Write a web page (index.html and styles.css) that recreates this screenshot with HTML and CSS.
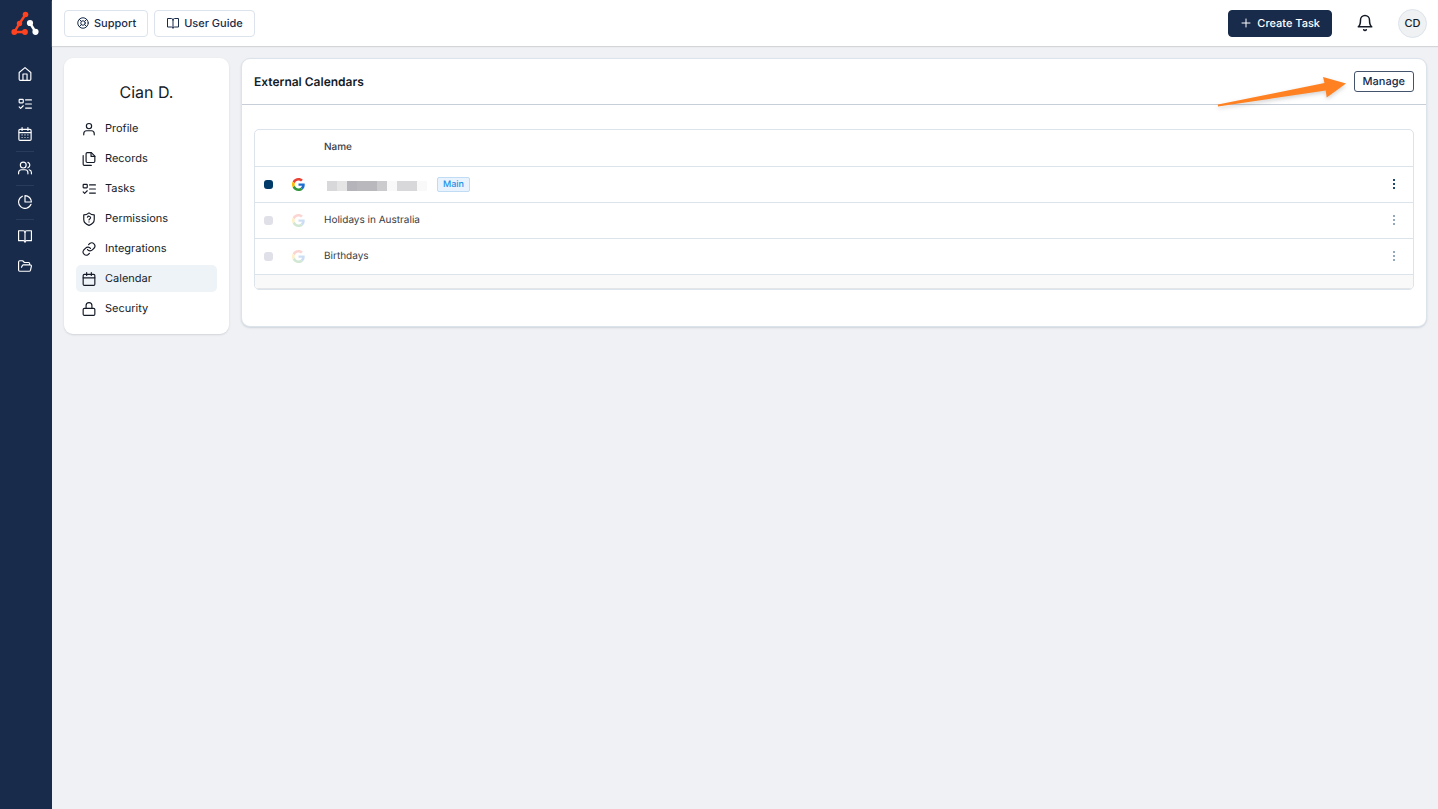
FILE: index.html
```html
<!DOCTYPE html>
<html lang="en">
<head>
<meta charset="utf-8">
<meta name="viewport" content="width=device-width, initial-scale=1">
<title>External Calendars</title>
<link rel="stylesheet" href="styles.css">
</head>
<body>
<svg class="defs" aria-hidden="true">
  <symbol id="home" viewBox="0 0 24 24"><path d="M2 9.500 12 1l10 8.500V21a2 2 0 0 1-2 2H4a2 2 0 0 1-2-2z"/><path d="M8.500 23V12h7v11"/></symbol>
  <symbol id="tasks" viewBox="0 0 24 24"><rect x="2" y="4" width="7" height="6" rx="1"/><path d="m2 17 2.500 2.500L9 15M13 5h10M13 12h10M13 19h10"/></symbol>
  <symbol id="days" viewBox="0 0 24 24"><rect x="1.500" y="4" width="21" height="19" rx="2"/><path d="M7 1v5M17 1v5M2 9.500h20M7 13.500h.01M12 13.500h.01M17 13.500h.01M7 18h.01M12 18h.01M17 18h.01"/></symbol>
  <symbol id="users" viewBox="0 0 24 24"><circle cx="9" cy="7" r="5"/><path d="M1 22v-2a5 5 0 0 1 5-5h6a5 5 0 0 1 5 5v2M23 22v-2a5 5 0 0 0-4-5M17 2.300a5 5 0 0 1 0 9.400"/></symbol>
  <symbol id="pie" viewBox="0 0 24 24"><path d="M12 1a11 11 0 0 1 11 11H12z"/><path d="M7.500 2A11 11 0 1 0 22.300 16"/></symbol>
  <symbol id="book" viewBox="0 0 24 24"><path d="M12 6a3 3 0 0 0-3-3H1v17h8a3 3 0 0 1 3 2.500A3 3 0 0 1 15 20h8V3h-8a3 3 0 0 0-3 3z"/><path d="M12 6v16"/></symbol>
  <symbol id="folder" viewBox="0 0 24 24"><path d="m6 14 1.500-3A2 2 0 0 1 9.300 10H21a2 2 0 0 1 1.900 2.500l-1.500 6.500A2 2 0 0 1 19.500 21H3a2 2 0 0 1-2-2V5a2 2 0 0 1 2-2h5l3 3h7a2 2 0 0 1 2 2v2"/></symbol>
  <symbol id="lifebuoy" viewBox="0 0 24 24"><circle cx="12" cy="12" r="10.500"/><circle cx="12" cy="12" r="4.500"/><path d="m4.600 4.600 4.200 4.200M15.200 15.200l4.200 4.200M19.400 4.600l-4.200 4.200M8.800 15.200l-4.200 4.200"/></symbol>
  <symbol id="plus" viewBox="0 0 24 24"><path d="M4 12h16M12 4v16"/></symbol>
  <symbol id="bell" viewBox="0 0 24 24"><path d="M6 8a6 6 0 0 1 12 0c0 7 3 9 3 9H3s3-2 3-9"/><path d="M10.300 21a2 2 0 0 0 3.400 0"/></symbol>
  <symbol id="user" viewBox="0 0 24 24"><circle cx="12" cy="7" r="4.500"/><path d="M3 22v-2a5 5 0 0 1 5-5h8a5 5 0 0 1 5 5v2"/></symbol>
  <symbol id="files" viewBox="0 0 24 24"><path d="M16 1H9a2 2 0 0 0-2 2v13a2 2 0 0 0 2 2h11a2 2 0 0 0 2-2V7z"/><path d="M15.500 1v6.500H22M2 6v15a2 2 0 0 0 2 2h12"/></symbol>
  <symbol id="shield" viewBox="0 0 24 24"><path d="M21 13c0 5-3.500 8-9 10-5.500-2-9-5-9-10V5c3.500 0 6-1 9-3.500C15 4 17.500 5 21 5z"/><path d="M9.300 9a2.800 2.800 0 0 1 5.400.9c0 1.900-2.700 2.100-2.700 3.600M12 17h.01"/></symbol>
  <symbol id="link" viewBox="0 0 24 24"><path d="M9.500 13a5.500 5.500 0 0 0 8.200.6l3.300-3.300a5.500 5.500 0 0 0-7.700-7.700l-2 1.900"/><path d="M14.500 11a5.500 5.500 0 0 0-8.200-.6L3 13.700a5.500 5.500 0 0 0 7.700 7.700l2-1.900"/></symbol>
  <symbol id="calendar" viewBox="0 0 24 24"><rect x="2" y="4" width="20" height="19" rx="2"/><path d="M8 1v5M16 1v5M2 10h20"/></symbol>
  <symbol id="lock" viewBox="0 0 24 24"><rect x="2" y="11" width="20" height="12" rx="2"/><path d="M7 11V6a5 5 0 0 1 10 0v5"/></symbol>
  <symbol id="google" viewBox="0 0 48 48"><path fill="#ea4335" d="M24 9.500c3.540 0 6.710 1.220 9.210 3.600l6.850-6.850C35.900 2.380 30.470 0 24 0 14.620 0 6.510 5.380 2.560 13.220l7.980 6.190C12.430 13.720 17.740 9.500 24 9.500z"/><path fill="#1f6fd0" d="M46.980 24.550c0-1.570-.15-3.090-.38-4.550H24v9.020h12.940c-.58 2.960-2.260 5.480-4.780 7.180l7.730 6c4.510-4.180 7.090-10.360 7.090-17.650z"/><path fill="#fbbc05" d="M10.530 28.590a14.500 14.500 0 0 1 0-9.180l-7.980-6.190a24 24 0 0 0 0 21.560z"/><path fill="#34963c" d="M24 48c6.480 0 11.930-2.130 15.890-5.810l-7.730-6c-2.150 1.450-4.920 2.300-8.160 2.300-6.260 0-11.570-4.220-13.470-9.910l-7.980 6.190C6.510 42.620 14.620 48 24 48z"/></symbol>
  <symbol id="dots" viewBox="0 0 4 12"><path fill="currentColor" d="M1 1h2v2H1zM1 5h2v2H1zM1 9h2v2H1z"/></symbol>
</svg>

<div class="app">
  <nav class="rail" aria-label="Main">
    <a class="logo" href="#" aria-label="Dashboard">
      <svg viewBox="0 0 28 26" width="28" height="26">
        <path fill="none" stroke="#ff4320" stroke-width="2.400" d="m14.500 3.500-6 9L3.500 21H14"/>
        <g fill="#ff4320"><circle cx="14.500" cy="3.500" r="2.800"/><circle cx="8.500" cy="12.500" r="2.700"/><circle cx="3.300" cy="21" r="2.900"/><circle cx="14" cy="21" r="2.900"/></g>
        <path stroke="#fff" stroke-width="2.400" d="m19 12 5.500 9"/><circle fill="#fff" cx="19" cy="12" r="3.100"/><circle fill="#fff" cx="24.500" cy="20.800" r="3.100"/>
      </svg>
    </a>
    <a class="rail-link" href="#" aria-label="Home"><svg class="icon"><use href="#home"/></svg></a>
    <a class="rail-link" href="#" aria-label="Tasks"><svg class="icon"><use href="#tasks"/></svg></a>
    <a class="rail-link" href="#" aria-label="Calendar"><svg class="icon"><use href="#days"/></svg></a>
    <hr class="rail-line">
    <a class="rail-link" href="#" aria-label="Contacts"><svg class="icon"><use href="#users"/></svg></a>
    <hr class="rail-line">
    <a class="rail-link" href="#" aria-label="Reports"><svg class="icon"><use href="#pie"/></svg></a>
    <hr class="rail-line">
    <a class="rail-link" href="#" aria-label="Library"><svg class="icon"><use href="#book"/></svg></a>
    <a class="rail-link" href="#" aria-label="Files"><svg class="icon"><use href="#folder"/></svg></a>
  </nav>

  <div class="page">
    <header class="topbar">
      <button class="btn"><svg class="icon icon-small"><use href="#lifebuoy"/></svg>Support</button>
      <button class="btn"><svg class="icon icon-small"><use href="#book"/></svg>User Guide</button>
      <div class="topbar-end">
        <button class="btn btn-primary"><svg class="icon icon-small"><use href="#plus"/></svg>Create Task</button>
        <button class="bell" aria-label="Notifications"><svg class="icon icon-large"><use href="#bell"/></svg></button>
        <button class="avatar">CD</button>
      </div>
    </header>

    <main class="content">
      <aside class="card profile">
        <h1 class="profile-name">Cian D.</h1>
        <nav class="menu" aria-label="Profile">
          <a class="menu-link" href="#"><svg class="icon"><use href="#user"/></svg>Profile</a>
          <a class="menu-link" href="#"><svg class="icon"><use href="#files"/></svg>Records</a>
          <a class="menu-link" href="#"><svg class="icon"><use href="#tasks"/></svg>Tasks</a>
          <a class="menu-link" href="#"><svg class="icon"><use href="#shield"/></svg>Permissions</a>
          <a class="menu-link" href="#"><svg class="icon"><use href="#link"/></svg>Integrations</a>
          <a class="menu-link active" href="#" aria-current="page"><svg class="icon"><use href="#calendar"/></svg>Calendar</a>
          <a class="menu-link" href="#"><svg class="icon"><use href="#lock"/></svg>Security</a>
        </nav>
      </aside>

      <section class="card calendars">
        <div class="card-head">
          <h2 class="card-title">External Calendars</h2>
          <div class="manage-wrap">
            <svg class="arrow" viewBox="0 0 130 32" width="130" height="32" aria-hidden="true"><path fill="#ff8121" d="M1 29.500 107.500 8 106 2l23 6.500-19.300 14-1-7L1 31.500z"/></svg>
            <button class="manage">Manage</button>
          </div>
        </div>
        <div class="card-body">
          <div class="table-frame">
            <table class="table">
              <thead>
                <tr><th class="col-state"></th><th class="col-source"></th><th class="col-name">Name</th><th class="col-more"></th></tr>
              </thead>
              <tbody>
                <tr>
                  <td class="col-state"><span class="state on"></span></td>
                  <td class="col-source"><svg class="source"><use href="#google"/></svg></td>
                  <td class="col-name"><div class="name-line"><span class="redacted"><i class="t2"></i><i class="t1"></i><i class="t5"></i><i class="t4"></i><i class="t4"></i><i class="t3"></i><i></i><i class="t2"></i><i class="t2"></i><i></i></span><span class="tag">Main</span></div></td>
                  <td class="col-more"><button class="more" aria-label="More options"><svg class="dots"><use href="#dots"/></svg></button></td>
                </tr>
                <tr class="off">
                  <td class="col-state"><span class="state"></span></td>
                  <td class="col-source"><svg class="source"><use href="#google"/></svg></td>
                  <td class="col-name">Holidays in Australia</td>
                  <td class="col-more"><button class="more" aria-label="More options"><svg class="dots"><use href="#dots"/></svg></button></td>
                </tr>
                <tr class="off">
                  <td class="col-state"><span class="state"></span></td>
                  <td class="col-source"><svg class="source"><use href="#google"/></svg></td>
                  <td class="col-name">Birthdays</td>
                  <td class="col-more"><button class="more" aria-label="More options"><svg class="dots"><use href="#dots"/></svg></button></td>
                </tr>
              </tbody>
            </table>
            <div class="table-foot"></div>
          </div>
        </div>
      </section>
    </main>
  </div>
</div>
</body>
</html>
```
FILE: styles.css
```css
* { box-sizing: border-box; }

body {
  margin: 0;
  background: #f0f1f4;
  color: #141a26;
  font: 11px/15px Inter, "Liberation Sans", sans-serif;
  text-rendering: geometricPrecision;
}

button { font: inherit; color: inherit; cursor: pointer; text-rendering: inherit; }
a { color: inherit; text-decoration: none; }

.defs { position: absolute; width: 0; height: 0; }

.icon {
  width: 14px;
  height: 14px;
  flex: none;
  fill: none;
  stroke: currentColor;
  stroke-width: 2;
  stroke-linecap: round;
  stroke-linejoin: round;
  overflow: visible;
}
.icon-small { width: 12px; height: 12px; }
.icon-large { width: 18px; height: 18px; }

.app { display: flex; min-height: 100vh; }

/* Left rail */
.rail {
  width: 52px;
  flex: none;
  padding: 11px 3px 0 0;
  background: #182b4b;
  color: #fff;
  display: flex;
  flex-direction: column;
  align-items: center;
}
.logo { display: block; height: 48px; }
.logo svg { display: block; }
.rail-link { width: 30px; height: 30px; display: grid; place-items: center; }
.rail-line { width: 18px; height: 1px; margin: 2px 0 1px; border: 0; background: #2b3c5a; }

/* Top bar */
.page { flex: 1; min-width: 0; display: flex; flex-direction: column; }
.topbar {
  display: flex;
  align-items: center;
  gap: 6px;
  padding: 8px 11px 8px 12px;
  height: 46px;
  background: #fff;
  box-shadow: 0 1px 1px #d3d5d9;
}
.btn {
  display: flex;
  align-items: center;
  gap: 5px;
  height: 27px;
  padding: 0 11px 0 12px;
  border: 1px solid #dce3ec;
  border-radius: 4px;
  background: #fff;
  color: #182b4b;
  font-weight: 500;
}
.btn-primary { padding: 0 11px; background: #182b4b; border-color: #182b4b; color: #fff; }
.topbar-end { margin-left: auto; display: flex; align-items: center; }
.bell { margin: 0 24px; padding: 0; border: 0; background: none; display: flex; }
.avatar {
  width: 29px;
  height: 29px;
  padding: 0;
  border: 1px solid #dce3ec;
  border-radius: 50%;
  background: #f0f1f3;
  font-weight: 500;
}

/* Content */
.content { display: flex; align-items: flex-start; gap: 12px; padding: 12px 11px 12px 12px; }
.card { background: #fff; border-radius: 9px; }

.profile { width: 165px; flex: none; padding: 24px 12px 12px; box-shadow: 0 1px 2px #d0d4da; }
.profile-name { margin: 0 0 13px; font-size: 16px; line-height: 20px; font-weight: 400; text-align: center; }
.menu { display: flex; flex-direction: column; gap: 3px; }
.menu-link {
  display: flex;
  align-items: center;
  gap: 9px;
  height: 27px;
  padding: 0 6px;
  border-radius: 5px;
}
.menu-link.active { background: #eef3f8; }

.calendars { flex: 1; min-width: 0; border: 1px solid #dde3ea; box-shadow: 0 1px 2px #cdd3dc; }
.card-head {
  display: flex;
  align-items: center;
  justify-content: space-between;
  height: 46px;
  padding: 0 12px;
  border-bottom: 1px solid #c8ced7;
}
.card-title { margin: 0; font-size: 12px; font-weight: 600; }
.manage-wrap { position: relative; display: flex; }
.manage {
  height: 21px;
  padding: 0 8px;
  border: 1px solid #44536c;
  border-radius: 3px;
  background: #fff;
  color: #182b4b;
  font-weight: 500;
}
.arrow {
  position: absolute;
  top: 4px;
  right: calc(100% + 7px);
  overflow: visible;
  filter: drop-shadow(0 2px 2px rgb(0 0 0 / 18%));
}
.card-body { padding: 24px 12px 36px; }

/* Calendar table */
.table-frame { border: 1px solid #dce3ea; border-radius: 5px; overflow: hidden; }
.table { width: 100%; border-collapse: separate; border-spacing: 0; table-layout: fixed; color: #3a3d45; font-size: 10px; }
.table th, .table td { height: 36px; padding: 0; border-bottom: 1px solid #dce3ea; text-align: left; vertical-align: middle; }
.table th { height: 37px; padding-bottom: 1px; font-weight: 500; }
.table .col-state { width: 28px; padding-left: 9px; }
.table .col-source { width: 41px; padding-left: 9px; }
.table .col-more { width: 30px; padding: 0 0 1px 2px; }
.state { display: block; width: 9px; height: 9px; border-radius: 3px; background: #e0e1e8; }
.state.on { background: #003a68; }
.source { display: block; width: 13px; height: 13px; }
.off .source { opacity: .22; }
.name-line { display: flex; align-items: center; gap: 10px; padding-left: 3px; }
.redacted { display: flex; padding-top: 3px; }
.redacted i { width: 10px; height: 10px; background: #f9f9f9; }
.redacted .t1 { background: #e5e5e6; }
.redacted .t2 { background: #d8d8da; }
.redacted .t3 { background: #cbcbcd; }
.redacted .t4 { background: #b9b9bd; }
.redacted .t5 { background: #b4b4ba; }
.tag {
  height: 15px;
  padding: 0 5px;
  border: 1px solid #bfdcf4;
  border-radius: 2px;
  background: #e8f3fd;
  color: #2590e8;
  font-size: 9px;
  line-height: 13px;
  font-weight: 500;
}
.more { display: grid; place-items: center; width: 18px; height: 18px; padding: 0; border: 0; background: none; color: #1d4a73; }
.off .more { color: #93a9bd; }
.dots { width: 4px; height: 12px; }
.table-foot { height: 14px; background: #f9f9f9; border-bottom: 1px solid #e3e5e9; }
```
